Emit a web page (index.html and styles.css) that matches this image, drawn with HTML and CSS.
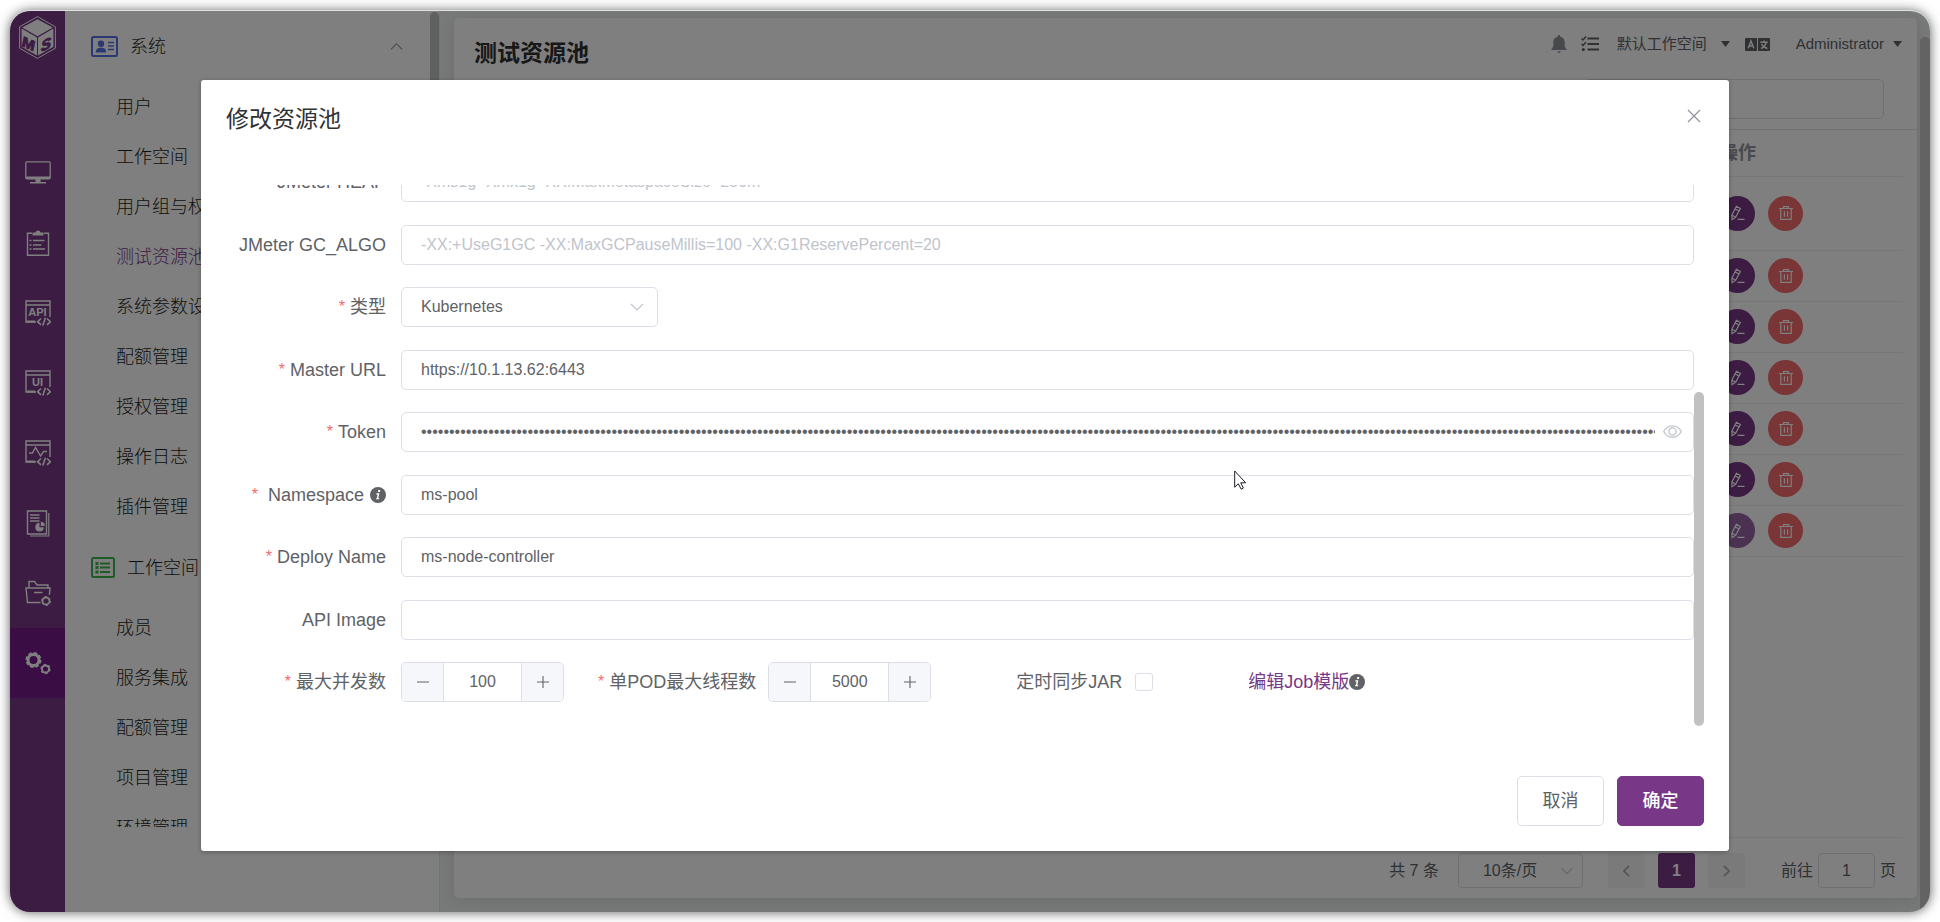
FILE: index.html
```html
<!DOCTYPE html>
<html lang="zh-CN">
<head>
<meta charset="utf-8">
<title>测试资源池</title>
<link rel="stylesheet" href="styles.css">
</head>
<body>
<svg class="sprite" aria-hidden="true">
  <symbol id="i-edit" viewBox="0 0 16 16"><path d="M6.400 1.200l4 2.200-4.800 9-3.600 2.200-.2-4.400z M5 3.800l4 2.200 M2 10.200l3.400 1.900 M7.500 14.400h7" fill="none" stroke="currentColor" stroke-width="1.200"/></symbol>
  <symbol id="i-trash" viewBox="0 0 16 16"><path d="M1 3.500h14 M5.500 3.200V1.600h5v1.600 M2.800 3.700v10.600h10.400V3.700 M6.400 6.200v5.600 M9.600 6.200v5.600" fill="none" stroke="currentColor" stroke-width="1.200"/></symbol>
  <symbol id="i-info" viewBox="0 0 16 16"><circle cx="8" cy="8" r="8" fill="#606266"/><path d="M8.3 3h2l-.4 1.9h-2z M6.400 6.300h3L8.300 11h1l-.2 1.200H5.900l.2-1h.7l.8-3.700h-1.400z" fill="#fff"/></symbol>
  <symbol id="i-down" viewBox="0 0 14 14"><path d="M1 4l6 6 6-6" fill="none" stroke="currentColor" stroke-width="1.200"/></symbol>
  <symbol id="i-minus" viewBox="0 0 14 14"><path d="M1 7h12" stroke="currentColor" stroke-width="1.100"/></symbol>
  <symbol id="i-plus" viewBox="0 0 14 14"><path d="M1 7h12M7 1v12" stroke="currentColor" stroke-width="1.100"/></symbol>
  <symbol id="i-caret" viewBox="0 0 9 6"><path d="M0 0h9L4.500 6z" fill="currentColor"/></symbol>
  <symbol id="i-window" viewBox="0 0 26 26"><path d="M25 17V1H1v21h10 M1 5h24" fill="none" stroke="#fff" stroke-width="1.400"/><path d="M2 20.500h8v2H2z" fill="#fff"/><path d="M16 18.500l-3.400 3.200 3.400 3.200 M22 18.500l3.400 3.200-3.400 3.200 M20.400 17.800l-2.600 7.600" fill="none" stroke="#fff" stroke-width="1.600"/></symbol>
</svg>

<div class="app">
  <nav class="rail" aria-label="主导航">
    <a class="logo" href="#" aria-label="MS">
      <svg viewBox="0 0 37 43" width="37" height="43">
        <path d="M18.500 .6L36.400 10.800v21.400L18.500 42.400.6 32.200V10.800z" fill="none" stroke="#fff" stroke-width="1"/>
        <path d="M18.500 3.200L33.800 11.400 18.500 20.300 3.200 11.400z" fill="#fff"/>
        <path d="M2.600 12.600L18 21.400v18.200L2.600 30.800z M34.400 12.600L19 21.400v18.200l15.400-8.800z" fill="#fff"/>
        <g class="logo-text"><text transform="translate(3 30) skewY(24)">M</text><text transform="translate(22 36) skewY(-26)">S</text></g>
      </svg>
    </a>
    <a class="rail-item" href="#" aria-label="工作台"><svg viewBox="0 0 26 24" width="26" height="24"><rect x=".8" y=".8" width="24.400" height="17" rx="1" fill="none" stroke="#fff" stroke-width="1.300"/><path d="M1 15.500h24v2.500H1z M10.500 18h5v3h-5z M5 21h16v1.600H5z" fill="#fff"/></svg></a>
    <a class="rail-item" href="#" aria-label="测试计划"><svg viewBox="0 0 24 27" width="24" height="27"><path d="M6 3.300H1.500v22h21v-22H18" fill="none" stroke="#fff" stroke-width="1.400"/><path d="M6.500 2.500H9.500Q9.800.5 12 .5t2.500 2h3v3h-11z" fill="#fff"/><path d="M3.500 10.500h2M7 10.500h11.500M3.500 15h2M7 15h8.500M3.500 19h2M7 19h12" stroke="#fff" stroke-width="1.300"/></svg></a>
    <a class="rail-item" href="#" aria-label="接口测试"><svg viewBox="0 0 26 26" width="26" height="26"><use href="#i-window"/><text class="icon-text" x="12.500" y="16" text-anchor="middle">API</text></svg></a>
    <a class="rail-item" href="#" aria-label="UI 测试"><svg viewBox="0 0 26 26" width="26" height="26"><use href="#i-window"/><text class="icon-text" x="12.500" y="16" text-anchor="middle">UI</text></svg></a>
    <a class="rail-item" href="#" aria-label="性能测试"><svg viewBox="0 0 26 26" width="26" height="26"><use href="#i-window"/><path d="M4 13h3.500l3-5.500 5 8.500 3-4.500H22" fill="none" stroke="#fff" stroke-width="1.400"/></svg></a>
    <a class="rail-item" href="#" aria-label="测试报告"><svg viewBox="0 0 24 27" width="24" height="27"><path d="M1.500 1h19v23h-19z" fill="none" stroke="#fff" stroke-width="1.400"/><path d="M22.800 3v23H4" fill="none" stroke="#fff" stroke-width="1.200"/><path d="M4 5h9.500M4 8h9.500M4 11h9.500" stroke="#fff" stroke-width="1.300"/><path d="M13.500 12.800v4.400h4.400a4.300 4.300 0 1 1-4.400-4.400z M14.800 11.500a4.400 4.400 0 0 1 4 4.400h-4z" fill="#fff"/></svg></a>
    <a class="rail-item" href="#" aria-label="项目设置"><svg viewBox="0 0 26 26" width="26" height="26"><path d="M4 7V1.500h5.500L12 5h11v3M15.500 22.500h-13L1 8h24l-.6 7 M9 12.500h8.500" fill="none" stroke="#fff" stroke-width="1.400"/><circle cx="21" cy="21" r="3.500" fill="none" stroke="#fff" stroke-width="1.800"/><circle cx="21" cy="21" r="4.500" fill="none" stroke="#fff" stroke-width="1" stroke-dasharray="2.400 2.300"/></svg></a>
    <a class="rail-item is-active" href="#" aria-label="系统设置" aria-current="page"><svg viewBox="0 0 26 26" width="26" height="26"><g fill="none" stroke="#fff"><circle cx="8.500" cy="10" r="5.500" stroke-width="3"/><circle cx="8.500" cy="10" r="7.200" stroke-width="1.600" stroke-dasharray="3.600 2.050"/><circle cx="20.500" cy="19" r="3.500" stroke-width="1.900"/><circle cx="20.500" cy="19" r="4.600" stroke-width="1.100" stroke-dasharray="2.500 2.300"/></g></svg></a>
  </nav>

  <aside class="side">
    <div class="side-list">
      <h2 class="side-group">
        <svg viewBox="0 0 27 21" width="27" height="21"><rect x="1" y="1" width="25" height="19" rx="1.500" fill="none" stroke="#5472e6" stroke-width="2"/><circle cx="10" cy="7.800" r="3.200" fill="#5472e6"/><path d="M4.800 16.500c0-4 2-4.800 5.200-4.800s5.200.8 5.200 4.800z" fill="#5472e6"/><path d="M17 6.500h6M17 10h6M17 13.500h6" stroke="#5472e6" stroke-width="1.300"/></svg>
        <span>系统</span>
        <svg class="chev" viewBox="0 0 14 14" width="13" height="13"><path d="M1 10l6-6 6 6" fill="none" stroke="#909399" stroke-width="1.200"/></svg>
      </h2>
      <a class="side-link" href="#">用户</a>
      <a class="side-link" href="#">工作空间</a>
      <a class="side-link" href="#">用户组与权限</a>
      <a class="side-link is-active" href="#">测试资源池</a>
      <a class="side-link" href="#">系统参数设置</a>
      <a class="side-link" href="#">配额管理</a>
      <a class="side-link" href="#">授权管理</a>
      <a class="side-link" href="#">操作日志</a>
      <a class="side-link" href="#">插件管理</a>
      <h2 class="side-group">
        <svg viewBox="0 0 24 21" width="24" height="21"><rect x="1" y="1" width="22" height="19" rx="1.500" fill="none" stroke="#3bb84b" stroke-width="2"/><path d="M9 6.500h10M9 10.500h10M9 15h10" stroke="#3bb84b" stroke-width="2"/><path d="M4.500 6.500h3M4.500 10.500h3M4.500 15h3" stroke="#3bb84b" stroke-width="3"/></svg>
        <span>工作空间</span>
      </h2>
      <a class="side-link" href="#">成员</a>
      <a class="side-link" href="#">服务集成</a>
      <a class="side-link" href="#">配额管理</a>
      <a class="side-link" href="#">项目管理</a>
      <a class="side-link" href="#">环境管理</a>
    </div>
    <div class="side-thumb"></div>
  </aside>

  <main class="main">
    <section class="card">
      <header class="card-head">
        <div class="head-row">
          <h1>测试资源池</h1>
          <div class="tools">
            <svg class="bell" viewBox="0 0 16 19" width="16" height="19"><path d="M7 0h2v1.500c3 .5 4.700 2.700 4.700 5.500v4.500L16 15H0l2.300-3.500V7C2.300 4.200 4 2 7 1.500z M6 16.500h4L8.700 18H7.300z" fill="currentColor"/></svg>
            <svg class="todo" viewBox="0 0 18 16" width="18" height="16"><path d="M6.500 2.500H18M6.500 8H18M6.500 13.500H18" stroke="currentColor" stroke-width="2.200"/><path d="M.5 2.500L2 4l3-3.500M.5 8L2 9.500 5 6" fill="none" stroke="currentColor" stroke-width="1.500"/><circle cx="2.300" cy="13.500" r="1.600" fill="currentColor"/></svg>
            <a class="tool-menu workspace" href="#">默认工作空间<svg viewBox="0 0 9 6" width="9" height="6"><use href="#i-caret"/></svg></a>
            <svg class="lang" viewBox="0 0 25 13" width="25" height="13"><path d="M1 0h11v13H1Q0 13 0 12V1Q0 0 1 0z M13 0h11q1 0 1 1v11q0 1-1 1H13z" fill="currentColor"/><path d="M3.200 10.300L6 3l2.800 7.300M4.200 8h3.600 M15.300 4.300h7.500M19 2.500v2M16 10.500q4-1.500 5.200-6M16.600 6q1.800 3.500 5.800 4.500" fill="none" stroke="#fff" stroke-width="1.400"/></svg>
            <a class="tool-menu" href="#">Administrator<svg viewBox="0 0 9 6" width="9" height="6"><use href="#i-caret"/></svg></a>
          </div>
        </div>
        <input class="search" type="search" aria-label="搜索">
      </header>

      <table class="pool">
        <colgroup><col><col class="col-ops"></colgroup>
        <thead><tr><th></th><th>操作</th></tr></thead>
        <tbody>
          <tr class="tall"><td></td><td><div class="ops"><button class="round edit" aria-label="编辑"><svg width="16" height="16"><use href="#i-edit"/></svg></button><button class="round del" aria-label="删除"><svg width="16" height="16"><use href="#i-trash"/></svg></button></div></td></tr>
          <tr><td></td><td><div class="ops"><button class="round edit" aria-label="编辑"><svg width="16" height="16"><use href="#i-edit"/></svg></button><button class="round del" aria-label="删除"><svg width="16" height="16"><use href="#i-trash"/></svg></button></div></td></tr>
          <tr><td></td><td><div class="ops"><button class="round edit" aria-label="编辑"><svg width="16" height="16"><use href="#i-edit"/></svg></button><button class="round del" aria-label="删除"><svg width="16" height="16"><use href="#i-trash"/></svg></button></div></td></tr>
          <tr><td></td><td><div class="ops"><button class="round edit" aria-label="编辑"><svg width="16" height="16"><use href="#i-edit"/></svg></button><button class="round del" aria-label="删除"><svg width="16" height="16"><use href="#i-trash"/></svg></button></div></td></tr>
          <tr><td></td><td><div class="ops"><button class="round edit" aria-label="编辑"><svg width="16" height="16"><use href="#i-edit"/></svg></button><button class="round del" aria-label="删除"><svg width="16" height="16"><use href="#i-trash"/></svg></button></div></td></tr>
          <tr><td></td><td><div class="ops"><button class="round edit" aria-label="编辑"><svg width="16" height="16"><use href="#i-edit"/></svg></button><button class="round del" aria-label="删除"><svg width="16" height="16"><use href="#i-trash"/></svg></button></div></td></tr>
          <tr><td></td><td><div class="ops"><button class="round edit is-faded" aria-label="编辑"><svg width="16" height="16"><use href="#i-edit"/></svg></button><button class="round del" aria-label="删除"><svg width="16" height="16"><use href="#i-trash"/></svg></button></div></td></tr>
        </tbody>
      </table>

      <footer class="pager">
        <span>共 7 条</span>
        <div class="page-size">
          <select aria-label="每页条数"><option>10条/页</option></select>
          <svg width="12" height="12"><use href="#i-down"/></svg>
        </div>
        <div class="pages">
          <button aria-label="上一页"><svg viewBox="0 0 8 14" width="7" height="12"><path d="M7 1L1 7l6 6" fill="none" stroke="#a8abb2" stroke-width="2"/></svg></button>
          <button class="is-current">1</button>
          <button aria-label="下一页"><svg viewBox="0 0 8 14" width="7" height="12"><path d="M1 1l6 6-6 6" fill="none" stroke="#a8abb2" stroke-width="2"/></svg></button>
        </div>
        <label class="jump">前往<input type="text" value="1">页</label>
      </footer>
    </section>
  </main>
  <div class="page-thumb"></div>

  <div class="overlay">
    <div class="dialog" role="dialog" aria-labelledby="dlg-title">
      <header class="dlg-head">
        <h2 id="dlg-title">修改资源池</h2>
        <button class="close" aria-label="关闭"><svg viewBox="0 0 14 14" width="14" height="14"><path d="M1 1l12 12M13 1L1 13" stroke="#909399" stroke-width="1.200"/></svg></button>
      </header>
      <div class="dlg-body">
        <form class="form">
          <div class="row"><label for="heap">JMeter HEAP</label><input id="heap" class="box" type="text" placeholder="-Xms1g -Xmx1g -XX:MaxMetaspaceSize=256m"></div>
          <div class="row"><label for="gc">JMeter GC_ALGO</label><input id="gc" class="box" type="text" placeholder="-XX:+UseG1GC -XX:MaxGCPauseMillis=100 -XX:G1ReservePercent=20"></div>
          <div class="row"><label for="type" class="req">类型</label><div class="select"><select id="type" class="box"><option>Kubernetes</option></select><svg width="14" height="14"><use href="#i-down"/></svg></div></div>
          <div class="row"><label for="url" class="req">Master URL</label><input id="url" class="box" type="text" value="https://10.1.13.62:6443"></div>
          <div class="row"><label for="token" class="req">Token</label><div class="secret"><input id="token" class="box" type="password" value="0123456789012345678901234567890123456789012345678901234567890123456789012345678901234567890123456789012345678901234567890123456789012345678901234567890123456789012345678901234567890123456789012345678901234567890123456789012345678901234567890123456789"><svg viewBox="0 0 19 13" width="19" height="13"><path d="M.7 6.500C2.500 3 5.700.8 9.500.8s7 2.200 8.800 5.700c-1.800 3.500-5 5.700-8.800 5.700S2.500 10 .7 6.500z" fill="none" stroke="#c0c4cc" stroke-width="1.300"/><circle cx="9.500" cy="6.500" r="3.600" fill="none" stroke="#c0c4cc" stroke-width="1.300"/></svg></div></div>
          <div class="row"><label for="ns" class="req wide">Namespace<svg class="tip" width="16" height="16"><use href="#i-info"/></svg></label><input id="ns" class="box" type="text" value="ms-pool"></div>
          <div class="row"><label for="deploy" class="req">Deploy Name</label><input id="deploy" class="box" type="text" value="ms-node-controller"></div>
          <div class="row"><label for="image">API Image</label><input id="image" class="box" type="text"></div>
          <div class="row"><label for="max" class="req">最大并发数</label>
            <div class="multi">
              <div class="stepper"><button type="button" aria-label="减少"><svg width="14" height="14"><use href="#i-minus"/></svg></button><input id="max" type="text" value="100"><button type="button" aria-label="增加"><svg width="14" height="14"><use href="#i-plus"/></svg></button></div>
              <label for="pod" class="req pod">单POD最大线程数</label>
              <div class="stepper"><button type="button" aria-label="减少"><svg width="14" height="14"><use href="#i-minus"/></svg></button><input id="pod" type="text" value="5000"><button type="button" aria-label="增加"><svg width="14" height="14"><use href="#i-plus"/></svg></button></div>
              <label for="jar" class="jar">定时同步JAR</label>
              <input id="jar" class="check" type="checkbox">
              <a class="job" href="#">编辑Job模版</a><svg width="16" height="16"><use href="#i-info"/></svg>
            </div>
          </div>
        </form>
        <div class="dlg-thumb"></div>
      </div>
      <footer class="dlg-foot">
        <button class="btn">取消</button>
        <button class="btn primary">确定</button>
      </footer>
    </div>
  </div>
  <svg class="cursor" viewBox="0 0 13 20" width="13" height="20"><path d="M.7 1v16.200l3.600-3.400 2.900 5.400 2.200-1.200-2.700-5.200h5z" fill="#fff" stroke="#1b1b26" stroke-width="1"/></svg>
</div>
</body>
</html>
```

FILE: styles.css
```css
:root {
  --purple: #783887;
  --line: #dcdfe6;
  --soft: #ebeef5;
  --text: #606266;
  --dark: #303133;
}

* { box-sizing: border-box; }

body {
  margin: 0;
  padding: 11px 10px 10px;
  height: 100vh;
  overflow: hidden;
  background: #fff;
  color: var(--text);
  font: 18px/24px "Liberation Sans", "Noto Sans CJK SC", sans-serif;
}

h1, h2 { margin: 0; }
a { color: inherit; text-decoration: none; }
input, select, button { font: inherit; color: inherit; }
button { padding: 0; border: 0; background: none; display: inline-flex; align-items: center; justify-content: center; }
svg { display: block; flex: none; }
.sprite { position: absolute; width: 0; height: 0; }

.app {
  position: relative;
  display: flex;
  height: 100%;
  overflow: hidden;
  border-radius: 20px;
  background: #f0f2f2;
}
body::before {
  content: "";
  position: absolute;
  inset: 11px 10px 10px;
  border-radius: 20px;
  box-shadow: 0 -1px 0 #dfe1e1, 0 0 12px rgba(0, 0, 0, .65);
}

/* icon rail */
.rail { width: 55px; background: var(--purple); display: flex; flex-direction: column; }
.logo { height: 127px; padding: 5px 9px; }
.logo-text { font: italic bold 15px "Liberation Sans", sans-serif; fill: var(--purple); stroke: var(--purple); stroke-width: 1px; }
.icon-text { font: bold 11px "Liberation Sans", sans-serif; fill: #fff; }
.rail-item { height: 70px; display: flex; align-items: center; justify-content: center; }
.rail-item.is-active { background: #741c8a; }

/* side menu */
.side { width: 375px; flex: none; position: relative; background: #fff; border-right: 1px solid #e6e6e6; color: #1d1e20; }
.side-list { height: 816px; overflow: hidden; }
.side-group { display: flex; align-items: center; gap: 12px; height: 71px; padding: 0 36px 0 26px; font-size: 18px; font-weight: 300; }
.side-group .chev { margin-left: auto; }
.side-link { display: flex; align-items: center; height: 50px; padding-left: 51px; font-weight: 300; }
.side-link.is-active { color: var(--purple); }
.side-thumb { position: absolute; top: 1px; right: 0; width: 9px; height: 600px; border-radius: 5px; background: #c1c1c1; }

/* main card */
.main { flex: 1; min-width: 0; padding: 7px 13px 14px 14px; display: flex; }
.card { flex: 1; min-width: 0; display: flex; flex-direction: column; background: #fff; border-radius: 5px; box-shadow: 0 3px 15px rgba(0, 0, 0, .1); }
.card-head { height: 112px; border-bottom: 1px solid #e3e3e3; display: flex; flex-direction: column; align-items: flex-end; padding: 0 15px 0 20px; }
.head-row { height: 61px; flex: none; align-self: stretch; display: flex; justify-content: space-between; align-items: flex-start; }
.head-row h1 { padding-top: 21px; font-size: 23px; line-height: 28px; color: var(--dark); }
.tools { display: flex; align-items: center; height: 52px; font-size: 15px; }
.tools svg { color: #606266; }
.tools .bell { color: #909399; }
.tools .todo { margin-left: 14px; }
.tool-menu { display: flex; align-items: center; gap: 9px; }
.workspace { margin: 0 15px 0 18px; gap: 14px; }
.tools .lang { margin-right: 26px; }
.search { width: 300px; height: 40px; margin-right: 18px; border: 1px solid var(--line); border-radius: 5px; outline: 0; }

.pool { margin: 0 14px 0 20px; border-collapse: collapse; table-layout: fixed; }
.col-ops { width: 183px; }
.pool th { height: 46px; padding: 0; text-align: left; color: #909399; border-bottom: 1px solid var(--soft); }
.pool td { height: 51px; padding: 0; border-bottom: 1px solid var(--soft); }
.pool .tall td { height: 74px; }
.ops { display: flex; gap: 13px; }
.round { width: 35px; height: 35px; border-radius: 50%; color: #fff; }
.edit { background: var(--purple); }
.edit.is-faded { background: #9664a4; }
.del { background: #f56c6c; }

.pager { margin: auto 14px 0 20px; padding: 15px 7px 10px 0; border-top: 1px solid var(--soft); display: flex; align-items: center; justify-content: flex-end; font-size: 16px; }
.page-size { position: relative; margin: 0 25px 0 19px; }
.page-size select { appearance: none; width: 125px; height: 35px; padding: 0 24px; border: 1px solid var(--line); border-radius: 4px; background: #fff; }
.page-size svg { position: absolute; right: 10px; top: 12px; color: #c0c4cc; }
.pages { display: flex; gap: 13px; }
.pages button { width: 37px; height: 35px; border-radius: 3px; background: #f4f4f5; font-weight: 700; }
.pages .is-current { background: var(--purple); color: #fff; }
.jump { display: flex; align-items: center; gap: 5px; margin-left: 36px; }
.jump input { width: 57px; height: 35px; border: 1px solid var(--line); border-radius: 4px; text-align: center; }
.page-thumb { position: absolute; top: 26px; right: 0; bottom: 0; width: 10px; border-radius: 5px 5px 0 0; background: #c6c6c6; }

/* dialog */
.overlay { position: absolute; inset: 0; display: flex; justify-content: center; padding: 69px 10px 61px 0; background: rgba(0, 0, 0, .5); }
.dialog { width: 80%; display: flex; flex-direction: column; background: #fff; border-radius: 3px; box-shadow: 0 1px 4px rgba(0, 0, 0, .3); }
.dlg-head { height: 105px; flex: none; padding: 25px 28px 0 25px; display: flex; justify-content: space-between; align-items: flex-start; }
.dlg-head h2 { font-size: 23px; line-height: 28px; font-weight: 400; color: var(--dark); }
.close { height: 21px; }
.dlg-body { flex: 1; min-height: 0; overflow: hidden; display: flex; align-items: flex-end; padding: 0 25px; }
.form { flex: 1; height: 563px; margin-bottom: 1px; display: grid; grid-template-rows: repeat(9, minmax(0, 1fr)); }
.dlg-thumb { width: 10px; height: 334px; border-radius: 5px; background: #c1c1c1; }
.row { display: grid; grid-template-columns: 160px minmax(0, 1fr); column-gap: 15px; align-items: start; }
.row label { display: flex; align-items: center; justify-content: flex-end; height: 40px; white-space: nowrap; }
.req::before { content: "*"; color: #f56c6c; margin-right: 5px; font-size: 16px; }
.req.wide::before { margin-right: 10px; }
.tip { margin-left: 6px; }
.box { width: 100%; height: 40px; padding: 0 19px; border: 1px solid var(--line); border-radius: 5px; background: #fff; font-size: 16px; outline: 0; }
.box::placeholder { color: #c0c4cc; }
.select { position: relative; width: 257px; }
.select .box { appearance: none; }
.select svg { position: absolute; right: 14px; top: 13px; color: #c0c4cc; }
.secret { position: relative; }
.secret .box { padding-right: 38px; }
.secret svg { position: absolute; right: 12px; top: 13px; }

.multi { display: flex; align-items: center; height: 40px; }
.stepper { display: flex; width: 163px; height: 40px; border: 1px solid var(--line); border-radius: 5px; overflow: hidden; }
.stepper button { width: 41px; background: #f5f7fa; }
.stepper input { flex: 1; min-width: 0; border: 1px solid var(--line); border-width: 0 1px; text-align: center; font-size: 16px; outline: 0; }
.row .pod { margin: 0 12px 0 34px; }
.row .jar { margin: 0 13px 0 85px; }
.check { appearance: none; width: 18px; height: 18px; margin: 0; border: 1px solid var(--line); border-radius: 3px; background: #fff; }
.job { margin-left: 95px; color: var(--purple); }

.dlg-foot { flex: none; display: flex; justify-content: flex-end; gap: 13px; padding: 50px 25px 25px; }
.btn { width: 87px; height: 50px; border: 1px solid var(--line); border-radius: 5px; background: #fff; }
.btn.primary { border-color: var(--purple); background: var(--purple); color: #fff; font-weight: 500; }

.cursor { position: absolute; left: 1224px; top: 459px; }
```
